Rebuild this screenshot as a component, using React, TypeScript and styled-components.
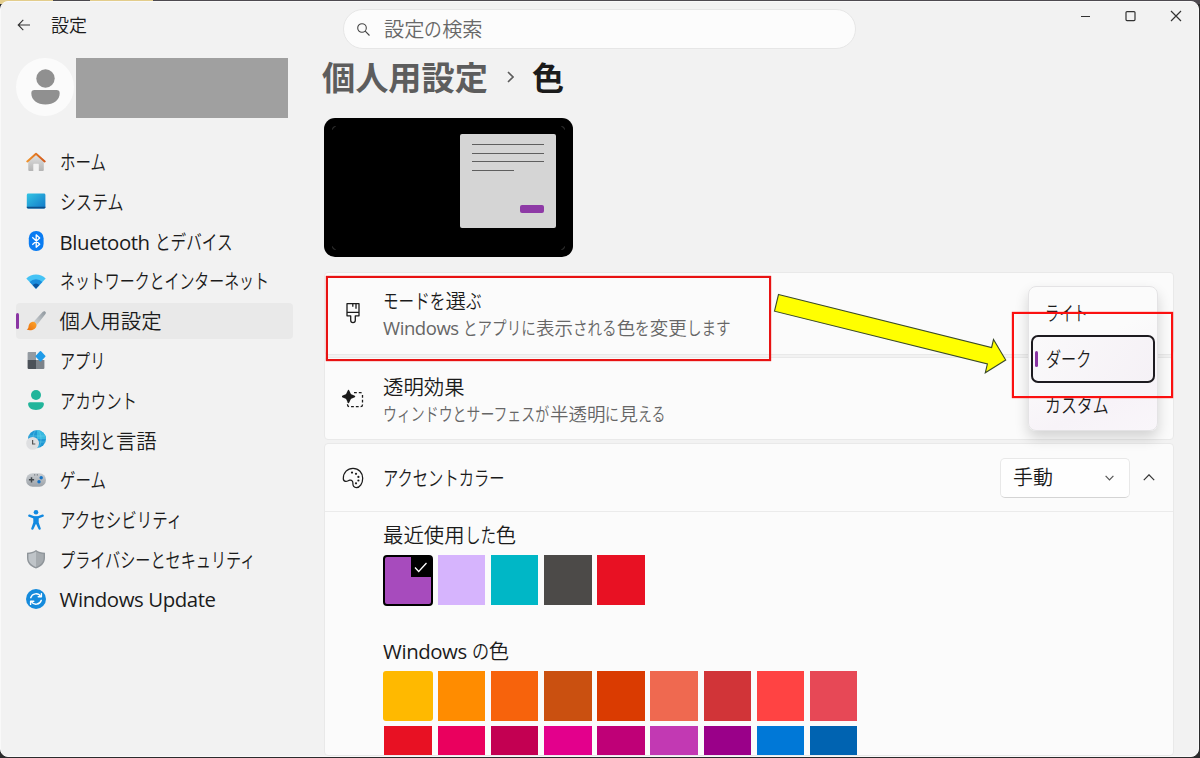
import React from "react";
import styled, { createGlobalStyle, css } from "styled-components";

const GlobalStyle = createGlobalStyle`
  *, *::before, *::after { box-sizing: border-box; }
  body {
    margin: 0;
    font-family: "Open Sans", "Noto Sans CJK JP", sans-serif;
    color: #1b1b1b;
  }
`;

/* ---------- text ---------- */

const Line = styled.span<{ $size: number; $color?: string; $weight?: number }>`
  display: block;
  white-space: pre;
  font-size: ${(p) => p.$size}px;
  line-height: 24px;
  height: 26px;
  color: ${(p) => p.$color ?? "#1b1b1b"};
  font-weight: ${(p) => p.$weight ?? 350};
`;

const Kanji = styled.span`
  font-family: "Noto Sans CJK JP", sans-serif;
`;

/* UI kana are set narrower than the full em square */
const Kana = styled.span<{ $count: number; $k: number }>`
  display: inline-block;
  font-family: "Noto Sans CJK JP", sans-serif;
  transform: scaleX(${(p) => p.$k});
  transform-origin: 0 50%;
  width: ${(p) => p.$count}em;
  margin-right: ${(p) => -(1 - p.$k) * p.$count}em;
`;

const Latin = styled.span<{ $track: number }>`
  font-weight: 400;
  letter-spacing: ${(p) => p.$track}px;
`;

type TextProps = {
  children: string;
  size?: number;
  k?: number;
  track?: number;
  color?: string;
  weight?: number;
};

function Text({ children, size = 20.4, k = 0.75, track = -0.42, color, weight }: TextProps) {
  const runs = children.match(/[\u3040-\u30ff]+|[\u0020-\u007e]+|[^\u0020-\u007e\u3040-\u30ff]+/g) ?? [];
  return (
    <Line $size={size} $color={color} $weight={weight}>
      {runs.map((run, i) => {
        if (/^[\u3040-\u30ff]/.test(run)) {
          return <Kana key={i} $count={run.length} $k={k}>{run}</Kana>;
        }
        if (/^[\u0020-\u007e]/.test(run)) {
          return <Latin key={i} $track={track}>{run}</Latin>;
        }
        return <Kanji key={i}>{run}</Kanji>;
      })}
    </Line>
  );
}

/* ---------- window ---------- */

const Desktop = styled.div`
  height: 758px;
  padding: 1px 1px 1px 0;
  background:
    linear-gradient(90deg, #e3cd8c 0 53px, #4b484e 53px 90px, #e3cd8c 90px 153px, #4e4a50 153px) 0 0 / 100% 4px no-repeat,
    #2b2b2c;
  overflow: hidden;
`;

const Window = styled.div`
  position: relative;
  display: flex;
  height: 756px;
  background: #f2f2f2;
  border: 1px solid #f9f9f9;
  border-radius: 8px;
  overflow: hidden;
`;

const Sidebar = styled.aside`
  width: 323px;
  flex: none;
  padding: 9px 0 0 15px;
`;

const TitleRow = styled.div`
  display: flex;
  align-items: center;
  gap: 20px;
  height: 28px;
  padding-left: 1px;
`;

const Account = styled.div`
  display: flex;
  align-items: center;
  gap: 1.5px;
  height: 60px;
  margin-top: 19px;
`;

const Avatar = styled.div`
  display: grid;
  place-items: center;
  width: 58px;
  height: 58px;
  margin-bottom: 3px;
  border-radius: 50%;
  background: #fbfbfb;
`;

const Redacted = styled.div`
  width: 212px;
  height: 60px;
  background: #a0a0a0;
`;

const Nav = styled.nav`
  display: flex;
  flex-direction: column;
  gap: 3.8px;
  margin-top: 26px;
`;

const NavItem = styled.div<{ $active?: boolean }>`
  display: flex;
  align-items: center;
  gap: 13.6px;
  width: 277px;
  height: 36px;
  padding-left: 10px;
  border-radius: 4px;
  ${(p) =>
    p.$active &&
    css`
      background: #e9e9e9;
      padding-left: 0;
      &::before {
        content: "";
        width: 3px;
        height: 16px;
        margin-right: -6.6px;
        border-radius: 2px;
        background: #8a35a3;
      }
    `}
`;

const NavIcon = styled.svg`
  width: 20px;
  height: 20px;
  margin-bottom: 1px;
  flex: none;
`;

const Main = styled.main`
  display: flex;
  flex-direction: column;
  width: 850px;
`;

const SearchBox = styled.div`
  display: flex;
  align-items: center;
  gap: 14px;
  width: 513px;
  height: 40px;
  margin: 7px 0 0 19px;
  padding: 1px 0 0 13px;
  background: #fcfcfc;
  border: 1px solid #e6e6e6;
  border-radius: 20px;
  flex: none;
`;

const Breadcrumb = styled.h1`
  display: flex;
  align-items: center;
  gap: 18px;
  height: 40px;
  margin: 8px 0 0 -2px;
  flex: none;
`;

const Preview = styled.div`
  position: relative;
  display: flex;
  justify-content: flex-end;
  width: 249px;
  height: 139px;
  margin-top: 21px;
  padding: 16px 17px 0 0;
  background: #000;
  border-radius: 11px;
  flex: none;
`;

const PreviewCorners = styled.svg`
  position: absolute;
  inset: 0;
  width: 249px;
  height: 139px;
`;

const PreviewWindow = styled.div`
  display: flex;
  flex-direction: column;
  gap: 7.6px;
  width: 96px;
  height: 94px;
  padding: 10px 12px 0;
  background: #d5d5d5;
  border-radius: 2px;
`;

const PreviewLine = styled.i<{ $w: number }>`
  display: block;
  width: ${(p) => p.$w}px;
  height: 1px;
  background: #5f5f5f;
`;

const PreviewButton = styled.i`
  display: block;
  width: 24px;
  height: 8px;
  margin: 26.5px 0 0 auto;
  border-radius: 2px;
  background: #8e3aa6;
`;

const Card = styled.section<{ $top: number; $h?: number }>`
  width: 850px;
  height: ${(p) => (p.$h ? `${p.$h}px` : "auto")};
  margin-top: ${(p) => p.$top}px;
  background: #fbfbfb;
  border: 1px solid #e9e9e9;
  border-radius: 4px;
  flex: none;
`;

const CardRow = styled.div<{ $h: number }>`
  display: flex;
  align-items: center;
  height: ${(p) => p.$h}px;
  padding: 0 18px 0 17px;
`;

const CardIcon = styled.svg`
  width: 22px;
  height: 22px;
  flex: none;
  margin-right: 19px;
`;

const CardText = styled.div<{ $drop?: boolean }>`
  display: flex;
  flex-direction: column;
  gap: 1px;
  flex: 1;
  padding-top: ${(p) => (p.$drop ? 2 : 0)}px;
`;

const Select = styled.div`
  display: flex;
  align-items: center;
  justify-content: space-between;
  width: 130px;
  height: 40px;
  padding: 0 15px 0 12px;
  margin-right: 13px;
  background: #fefefe;
  border: 1px solid #e8e8e8;
  border-bottom-color: #d4d4d4;
  border-radius: 5px;
`;

const Palette = styled.div`
  height: 244px;
  padding: 10px 0 0 58px;
  border-top: 1px solid #ebebeb;
  overflow: hidden;
`;

const SwatchGrid = styled.div<{ $after: number }>`
  display: grid;
  grid-template-columns: repeat(9, 47.6px);
  column-gap: 5.6px;
  row-gap: 5px;
  margin: 7px 0 ${(p) => p.$after}px 1.4px;
`;

const Swatch = styled.div<{ $c: string; $large?: boolean; $selected?: boolean }>`
  display: flex;
  justify-content: flex-end;
  height: 50px;
  background: ${(p) => p.$c};
  ${(p) =>
    p.$large &&
    css`
      margin: 0 -1px 0 -1.4px;
      border-radius: 3px;
    `}
  ${(p) =>
    p.$selected &&
    css`
      height: 51px;
      margin-bottom: -1px;
      border: 2px solid #000;
      border-radius: 4px;
    `}
`;

const CheckCorner = styled.svg`
  width: 20px;
  height: 20px;
  background: #000;
`;

const WindowControls = styled.svg`
  position: absolute;
  right: 14px;
  top: 6px;
  width: 104px;
  height: 16px;
`;

/* ---------- overlays ---------- */

const Menu = styled.div`
  position: absolute;
  left: 1027px;
  top: 284px;
  width: 130px;
  height: 145px;
  padding: 2px;
  border: 1px solid #e4e3e5;
  border-radius: 8px;
  background: linear-gradient(155deg, #fbfbfb 40%, #f7f3f8 75%, #f9f6fa);
  box-shadow: 0 7px 14px rgba(0, 0, 0, 0.16);
`;

const MenuItem = styled.div<{ $selected?: boolean }>`
  display: flex;
  align-items: center;
  width: 124px;
  height: 43px;
  padding-left: 14px;
  &:first-child {
    height: 46px;
    padding-top: 2px;
  }
  ${(p) =>
    p.$selected &&
    css`
      height: 48px;
      padding-left: 2px;
      border: 2px solid #1d1b20;
      border-radius: 7px;
      background: linear-gradient(120deg, #faf9fa, #f5f1f6);
      &::before {
        content: "";
        width: 3px;
        height: 16px;
        margin-right: 8px;
        border-radius: 2px;
        background: #8a35a3;
      }
    `}
`;

const Callout = styled.div<{ $x: number; $y: number; $w: number; $h: number; $c: string }>`
  position: absolute;
  left: ${(p) => p.$x}px;
  top: ${(p) => p.$y}px;
  width: ${(p) => p.$w}px;
  height: ${(p) => p.$h}px;
  border: 2px solid ${(p) => p.$c};
  box-shadow: 0 0 1px ${(p) => p.$c};
`;

const Arrow = styled.svg`
  position: absolute;
  left: 769px;
  top: 288px;
  width: 242px;
  height: 90px;
`;

/* ---------- icons ---------- */

const icons: Record<string, React.ReactNode> = {
  home: (
    <>
      <defs>
        <linearGradient id="hm" x1="0" y1="0" x2="0" y2="1"><stop stopColor="#e4e4e4" /><stop offset="1" stopColor="#b4b4b4" /></linearGradient>
        <linearGradient id="hr" x1="0" y1="0" x2="1" y2="0"><stop stopColor="#f0932b" /><stop offset="1" stopColor="#d2591c" /></linearGradient>
      </defs>
      <path d="M2.2 9 10 2l7.8 7v9a1 1 0 0 1-1 1h-4v-6.5a.7.7 0 0 0-.7-.7H8a.7.7 0 0 0-.7.7V19h-4a1 1 0 0 1-1-1z" fill="url(#hm)" />
      <path d="M1.3 9.4 10 1.8l8.7 7.6" fill="none" stroke="url(#hr)" strokeWidth="2" strokeLinecap="round" strokeLinejoin="round" />
    </>
  ),
  system: (
    <>
      <defs><linearGradient id="sy" x1="0" y1="0" x2="1" y2="1"><stop stopColor="#33c5e4" /><stop offset="1" stopColor="#1278c8" /></linearGradient></defs>
      <rect x=".8" y="2.5" width="18.6" height="15" rx="1.4" fill="url(#sy)" />
      <path d="M.8 15.7h18.6v.6a1.3 1.3 0 0 1-1.3 1.3h-16A1.3 1.3 0 0 1 .8 16.3z" fill="#0c4f8a" />
    </>
  ),
  bluetooth: (
    <>
      <rect x="2.8" y="0" width="14.8" height="20" rx="7.2" fill="#0a7cf2" />
      <path d="M6.3 6.3l7.4 6.9L10.2 16.2V3.8l3.5 3.2-7.4 6.7" fill="none" stroke="#fff" strokeWidth="1.3" strokeLinejoin="round" />
    </>
  ),
  network: (
    <>
      <path d="M.3 7.6a13.8 13.8 0 0 1 19.4 0L10 17.8z" fill="#45c3f5" />
      <path d="M3.6 10.9a9.2 9.2 0 0 1 12.8 0L10 17.8z" fill="#1c8ddc" />
      <path d="M6.600 14.1a5 5 0 0 1 6.8 0L10 17.8z" fill="#0b559f" />
    </>
  ),
  brush: (
    <>
      <defs>
        <linearGradient id="bh" x1="1" y1="0" x2="0" y2="1"><stop stopColor="#8d969c" /><stop offset="1" stopColor="#d5d9dc" /></linearGradient>
        <linearGradient id="bb" x1="1" y1="0" x2="0" y2="1"><stop stopColor="#ffa62b" /><stop offset="1" stopColor="#e8700f" /></linearGradient>
      </defs>
      <path d="M19.3.7c1 .9.5 2-.2 2.9l-8.6 10.8-3.4-3.2L16.6 1c.9-.8 1.900-1.1 2.7-.3z" fill="url(#bh)" />
      <path d="M6.7 10.7c1.8-.3 4 1.6 3.8 3.7-.3 3.6-5 5.8-9.8 4.2 1.900-.8 1.600-2 2-4 .4-2.2 1.900-3.6 4-3.9z" fill="url(#bb)" />
    </>
  ),
  apps: (
    <>
      <path d="M2.6 2h7.4v8H1.600V3a1 1 0 0 1 1-1z" fill="#949ba2" />
      <path d="M1.6 10H10v9H2.600a1 1 0 0 1-1-1z" fill="#4b5158" />
      <path d="M10 10h8.4v8a1 1 0 0 1-1 1H10z" fill="#7c838a" />
      <path d="M13.9 1.3q.6-.5 1.2 0l4.2 4.4q.5.5 0 1.1l-4.2 4.4q-.6.5-1.2 0L9.7 6.8q-.5-.6 0-1.1z" fill="#1f9be8" />
    </>
  ),
  account: (
    <>
      <circle cx="10" cy="5" r="5" fill="#22b59b" />
      <path d="M3.7 12.2h12.6a1.6 1.6 0 0 1 1.6 1.6c0 3.6-3 6.2-7.9 6.2s-7.9-2.6-7.9-6.2a1.6 1.6 0 0 1 1.6-1.6z" fill="#22b59b" />
    </>
  ),
  time: (
    <>
      <circle cx="11" cy="9" r="9" fill="#1f98d4" />
      <path d="M11 0a9 9 0 0 1 9 9h-9z" fill="#38b9e0" />
      <g fill="none" stroke="#6fd0ea" strokeWidth=".5"><ellipse cx="11" cy="9" rx="4" ry="9" /><path d="M2.6 6h16.8M2.6 12h16.8" /></g>
      <circle cx="6.6" cy="13.4" r="6.4" fill="#dedfe1" />
      <path d="M6.6 10v4h2.7" fill="none" stroke="#555" strokeWidth="1.2" />
    </>
  ),
  game: (
    <>
      <defs><linearGradient id="gm" x1="0" y1="0" x2="0" y2="1"><stop stopColor="#c9cdd1" /><stop offset="1" stopColor="#9ca2a8" /></linearGradient></defs>
      <rect x="0" y="3.3" width="20" height="13.4" rx="6.6" fill="url(#gm)" />
      <path d="M5.5 7.2v5.2M2.9 9.8h5.2" stroke="#42474c" strokeWidth="1.5" />
      <path d="M8.3 4.9h.9M10.8 4.9h.9" stroke="#5b6168" strokeWidth="1.1" />
      <circle cx="15.2" cy="7.7" r="1.7" fill="#1673c5" /><circle cx="13" cy="11.7" r="1.7" fill="#1673c5" />
    </>
  ),
  access: (
    <>
      <circle cx="10" cy="2.3" r="2.3" fill="#1289e0" />
      <path d="M3.3 5.6 8 7.3h4l4.7-1.7" fill="none" stroke="#1289e0" strokeWidth="2.3" strokeLinecap="round" strokeLinejoin="round" />
      <path d="M7.3 6.4h5.4v6l2 5.8a1.15 1.15 0 0 1-2.2.8L10 13.8 7.5 19a1.15 1.15 0 0 1-2.2-.8l2-5.8z" fill="#1289e0" />
    </>
  ),
  shield: (
    <>
      <path d="M10 1c2.5 1.9 5.3 2.7 9 2.8V9c0 5-3.5 8.5-9 10.6C4.5 17.5 1 14 1 9V3.8C4.7 3.7 7.5 2.9 10 1z" fill="#8f959a" />
      <path d="M10 2.6c2.3 1.5 4.6 2.2 7.6 2.4V9c0 4-2.7 7-7.6 9z" fill="#a6abaf" />
      <path d="M10 2.6C7.7 4.1 5.4 4.8 2.4 5v4c0 4 2.7 7 7.6 9z" fill="#bfc4c8" />
    </>
  ),
  update: (
    <>
      <circle cx="10" cy="10" r="10" fill="#158bdc" />
      <g fill="none" stroke="#fff" strokeWidth="1.4" strokeLinecap="round" strokeLinejoin="round">
        <path d="M4.7 8.7a5.5 5.5 0 0 1 10-1.2M15.3 11.3a5.5 5.5 0 0 1-10 1.2" />
        <path d="M15.4 4.6v3.2h-3.2M4.6 15.4v-3.2h3.2" />
      </g>
    </>
  ),
};

const navItems = [
  { icon: "home", label: "ホーム", k: 0.76 },
  { icon: "system", label: "システム", k: 0.785 },
  { icon: "bluetooth", label: "Bluetooth とデバイス", k: 0.765 },
  { icon: "network", label: "ネットワークとインターネット", k: 0.732 },
  { icon: "brush", label: "個人用設定", active: true },
  { icon: "apps", label: "アプリ", k: 0.74 },
  { icon: "account", label: "アカウント", k: 0.755 },
  { icon: "time", label: "時刻と言語", k: 0.76 },
  { icon: "game", label: "ゲーム", k: 0.76 },
  { icon: "access", label: "アクセシビリティ", k: 0.76 },
  { icon: "shield", label: "プライバシーとセキュリティ", k: 0.742 },
  { icon: "update", label: "Windows Update" },
];

const recent = ["#a74bbd", "#d6b4fd", "#00b7c6", "#4c4a48", "#e81123"];
const windowsColors = [
  "#ffb900", "#ff8c00", "#f7630c", "#ca5010", "#da3b01", "#ef6950", "#d13438", "#ff4343", "#e74856",
  "#e81123", "#ea005e", "#c30052", "#e3008c", "#bf0077", "#c239b3", "#9a0089", "#0078d7", "#0063b1",
];

export default function App() {
  return (
    <>
      <GlobalStyle />
      <Desktop>
        <Window>
          <Sidebar>
            <TitleRow>
              <svg width="14" height="12" viewBox="0 0 14 12" fill="none" stroke="#333" strokeWidth="1.1">
                <path d="M13 6H1.3M6.3.9 1.2 6l5.1 5.1" />
              </svg>
              <Text size={18}>設定</Text>
            </TitleRow>
            <Account>
              <Avatar>
                <svg width="30" height="36" viewBox="0 0 30 36" fill="#909090">
                  <circle cx="15.5" cy="9.5" r="9.2" />
                  <path d="M4.5 21h22a3.2 3.2 0 0 1 3.2 3.2C29.7 31 23.5 35.5 15.5 35.5S1.3 31 1.3 24.2A3.2 3.2 0 0 1 4.5 21z" />
                </svg>
              </Avatar>
              <Redacted />
            </Account>
            <Nav>
              {navItems.map((n) => (
                <NavItem key={n.icon} $active={n.active}>
                  <NavIcon viewBox="0 0 20 20">{icons[n.icon]}</NavIcon>
                  <Text k={n.k}>{n.label}</Text>
                </NavItem>
              ))}
            </Nav>
          </Sidebar>

          <Main>
            <SearchBox>
              <svg width="13" height="13" viewBox="0 0 13 13" fill="none" stroke="#444" strokeWidth="1.1">
                <circle cx="5" cy="5" r="4.3" /><path d="m8.2 8.2 4.3 4.3" />
              </svg>
              <Text size={20.2} k={0.88} color="#686868">設定の検索</Text>
            </SearchBox>
            <Breadcrumb>
              <Text size={33.2} weight={700} color="#5d5d5d">個人用設定</Text>
              <svg width="8" height="12" viewBox="0 0 8 12" fill="none" stroke="#5d5d5d" strokeWidth="1.6">
                <path d="m2 1 5 5-5 5" />
              </svg>
              <Text size={32} weight={700} color="#1b1b1b">色</Text>
            </Breadcrumb>
            <Preview>
              <PreviewCorners viewBox="0 0 249 139" fill="none" stroke="#444" strokeWidth=".8">
                <path d="M8.5 11.5a3 3 0 0 1 3-3M237.5 8.5a3 3 0 0 1 3 3M240.5 128.5a3 3 0 0 1-3 3M11.5 131.5a3 3 0 0 1-3-3" />
              </PreviewCorners>
              <PreviewWindow>
                <PreviewLine $w={72} />
                <PreviewLine $w={72} />
                <PreviewLine $w={72} />
                <PreviewLine $w={42} />
                <PreviewButton />
              </PreviewWindow>
            </Preview>

            <Card $top={15} $h={83}>
              <CardRow $h={80}>
                <CardIcon viewBox="0 0 22 22" fill="none" stroke="#1b1b1b" strokeWidth="1.3" strokeLinejoin="round">
                  <path d="M5 1.7h12v12.1h-3.7v4.5a2.3 2.3 0 0 1-4.6 0v-4.5H5zM5 10.3h12M10.8 1.7v3M14 1.7v5" />
                </CardIcon>
                <CardText $drop>
                  <Text k={0.765}>モードを選ぶ</Text>
                  <Text size={18.5} k={0.787} color="#666">Windows とアプリに表示される色を変更します</Text>
                </CardText>
              </CardRow>
            </Card>
            <Card $top={2} $h={83}>
              <CardRow $h={83}>
                <CardIcon viewBox="0 0 22 22">
                  <path d="M6.5 1.5 8.4 5.6 12.5 7.5 8.4 9.4 6.5 13.5 4.6 9.4.5 7.5 4.6 5.6z" fill="#1b1b1b" stroke="#1b1b1b" strokeWidth="1.4" strokeLinejoin="round" />
                  <path d="M12 3.7h6.5a2 2 0 0 1 2 2v10a2 2 0 0 1-2 2h-11a2 2 0 0 1-2-2V13" fill="none" stroke="#1b1b1b" strokeWidth="1.3" strokeDasharray="2.8 2" />
                </CardIcon>
                <CardText $drop>
                  <Text>透明効果</Text>
                  <Text size={18.5} k={0.752} color="#666">ウィンドウとサーフェスが半透明に見える</Text>
                </CardText>
              </CardRow>
            </Card>
            <Card $top={3}>
              <CardRow $h={67}>
                <CardIcon viewBox="0 0 22 22" fill="none" stroke="#1b1b1b" strokeWidth="1.25">
                  <path d="M1.3 11.4C1.3 5.5 5.5 1.3 11 1.3c5.8 0 9.7 4.5 9.7 10 0 5-2.8 9.3-6.3 9.3-2.5 0-3.6-1.8-3.5-4 .1-2.3-1-3.9-3.2-3.4-1.4.3-2.4 1.3-4 1.1-1.5-.2-2.4-1.4-2.4-2.9z" />
                  <g fill="#1b1b1b" stroke="none"><circle cx="10" cy="5.6" r="1.1" /><circle cx="14" cy="6.8" r="1.1" /><circle cx="16.4" cy="9.9" r="1.1" /><circle cx="16.4" cy="13.5" r="1.1" /><circle cx="14" cy="16.3" r="1.1" /></g>
                </CardIcon>
                <CardText>
                  <Text k={0.75}>アクセントカラー</Text>
                </CardText>
                <Select>
                  <Text size={20}>手動</Text>
                  <svg width="9" height="6" viewBox="0 0 9 6" fill="none" stroke="#555" strokeWidth="1.2"><path d="m.6.8 3.9 4 3.9-4" /></svg>
                </Select>
                <svg width="12" height="7" viewBox="0 0 12 7" fill="none" stroke="#333" strokeWidth="1.2"><path d="m.8 6.2 5.2-5.4 5.2 5.4" /></svg>
              </CardRow>
              <Palette>
                <Text k={0.765}>最近使用した色</Text>
                <SwatchGrid $after={33}>
                  {recent.map((c, i) => (
                    <Swatch key={c} $c={c} $large={i === 0} $selected={i === 0}>
                      {i === 0 && (
                        <CheckCorner viewBox="0 0 20 20" fill="none" stroke="#fff" strokeWidth="1.3">
                          <path d="m4 10.5 3.7 4L15.5 6" />
                        </CheckCorner>
                      )}
                    </Swatch>
                  ))}
                </SwatchGrid>
                <Text k={0.84}>Windows の色</Text>
                <SwatchGrid $after={0}>
                  {windowsColors.map((c, i) => (
                    <Swatch key={c} $c={c} $large={i === 0} />
                  ))}
                </SwatchGrid>
              </Palette>
            </Card>
          </Main>

          <WindowControls viewBox="0 0 104 16" fill="none" stroke="#333" strokeWidth="1.2">
            <path d="M1 8.5h9" />
            <rect x="46" y="3.6" width="9" height="9" rx="1" />
            <path d="m91 3 10 10M101 3 91 13" />
          </WindowControls>

          <Menu>
            <MenuItem><Text k={0.7}>ライト</Text></MenuItem>
            <MenuItem $selected><Text k={0.74}>ダーク</Text></MenuItem>
            <MenuItem><Text k={0.78}>カスタム</Text></MenuItem>
          </Menu>

          <Callout $x={325} $y={274} $w={445} $h={85} $c="#e81212" />
          <Callout $x={1011} $y={310} $w={161} $h={86} $c="#fb1010" />
          <Arrow viewBox="770 290 242 90">
            <path
              d="M778.5 294.5 991.6 347.5 993.5 339.5 1005.7 360 985.3 372.8 987.4 364 774.5 311.2z"
              fill="#ffff00"
              stroke="#3a4a2a"
              strokeWidth="1.1"
            />
          </Arrow>
        </Window>
      </Desktop>
    </>
  );
}
